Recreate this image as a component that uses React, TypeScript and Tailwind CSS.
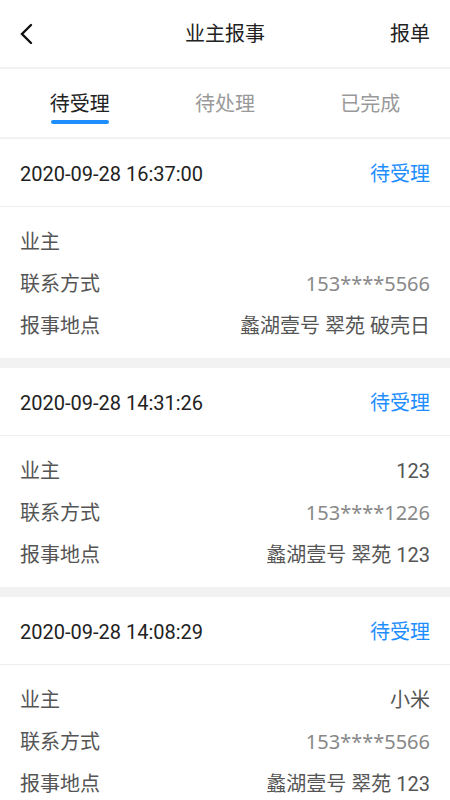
import React from 'react';

const font = { fontFamily: '"Roboto", "Noto Sans CJK SC", sans-serif' };
const wide = { fontFamily: '"Noto Sans", "Noto Sans CJK SC", sans-serif' };

type Report = {
  time: string;
  owner: string;
  phone: string;
  place: string;
};

const reports: Report[] = [
  { time: '2020-09-28 16:37:00', owner: '', phone: '153****5566', place: '蠡湖壹号 翠苑 破壳日' },
  { time: '2020-09-28 14:31:26', owner: '123', phone: '153****1226', place: '蠡湖壹号 翠苑 123' },
  { time: '2020-09-28 14:08:29', owner: '小米', phone: '153****5566', place: '蠡湖壹号 翠苑 123' },
];

function Row({ label, value, muted }: { label: string; value: string; muted?: boolean }) {
  return (
    <div className="flex h-[42px] items-center justify-between px-5 text-[20px]">
      <span className="text-[#555]">{label}</span>
      {muted ? (
        <span className="text-[#888]" style={wide}>{value}</span>
      ) : (
        <span className="text-[#555]">{value}</span>
      )}
    </div>
  );
}

function Card({ r }: { r: Report }) {
  return (
    <div className="bg-white">
      <div className="flex h-[67px] items-center justify-between px-5 pt-[2px] text-[20px]">
        <span className="text-[#222]">{r.time}</span>
        <span className="text-[#1e8eff]">待受理</span>
      </div>
      <div className="h-px bg-[#eeeeee]" />
      <div className="pt-[14px] pb-[11px]">
        <Row label="业主" value={r.owner} />
        <Row label="联系方式" value={r.phone} muted />
        <Row label="报事地点" value={r.place} />
      </div>
    </div>
  );
}

export default function App() {
  return (
    <div className="h-[800px] w-[450px] overflow-hidden bg-[#f2f2f2]" style={font}>
      {/* header */}
      <div className="relative flex h-[67px] items-center justify-center bg-white">
        <svg className="absolute left-[19px] top-[23px]" width="14" height="22" viewBox="0 0 14 22">
          <path d="M12 2 L3 11 L12 20" fill="none" stroke="#111" strokeWidth="2.4" strokeLinecap="round" />
        </svg>
        <span className="text-[20px] text-[#222]">业主报事</span>
        <span className="absolute right-5 text-[20px] text-[#222]">报单</span>
      </div>
      <div className="h-[2px] bg-[#f2f2f2]" />

      {/* tabs */}
      <div className="flex h-[68px] bg-white px-[7px]">
        <div className="flex flex-1 flex-col items-center pt-[22px]">
          <span className="text-[20px] leading-[26px] text-[#222]">待受理</span>
          <div className="mt-[3px] h-[4px] w-[58px] rounded-full bg-[#1e8eff]" />
        </div>
        <div className="flex flex-1 flex-col items-center pt-[22px]">
          <span className="text-[20px] leading-[26px] text-[#999]">待处理</span>
        </div>
        <div className="flex flex-1 flex-col items-center pt-[22px]">
          <span className="text-[20px] leading-[26px] text-[#999]">已完成</span>
        </div>
      </div>
      <div className="h-[2px] bg-[#f2f2f2]" />

      {/* list */}
      <div className="flex flex-col gap-[10px]">
        {reports.map((r, i) => (
          <Card key={i} r={r} />
        ))}
      </div>
    </div>
  );
}
